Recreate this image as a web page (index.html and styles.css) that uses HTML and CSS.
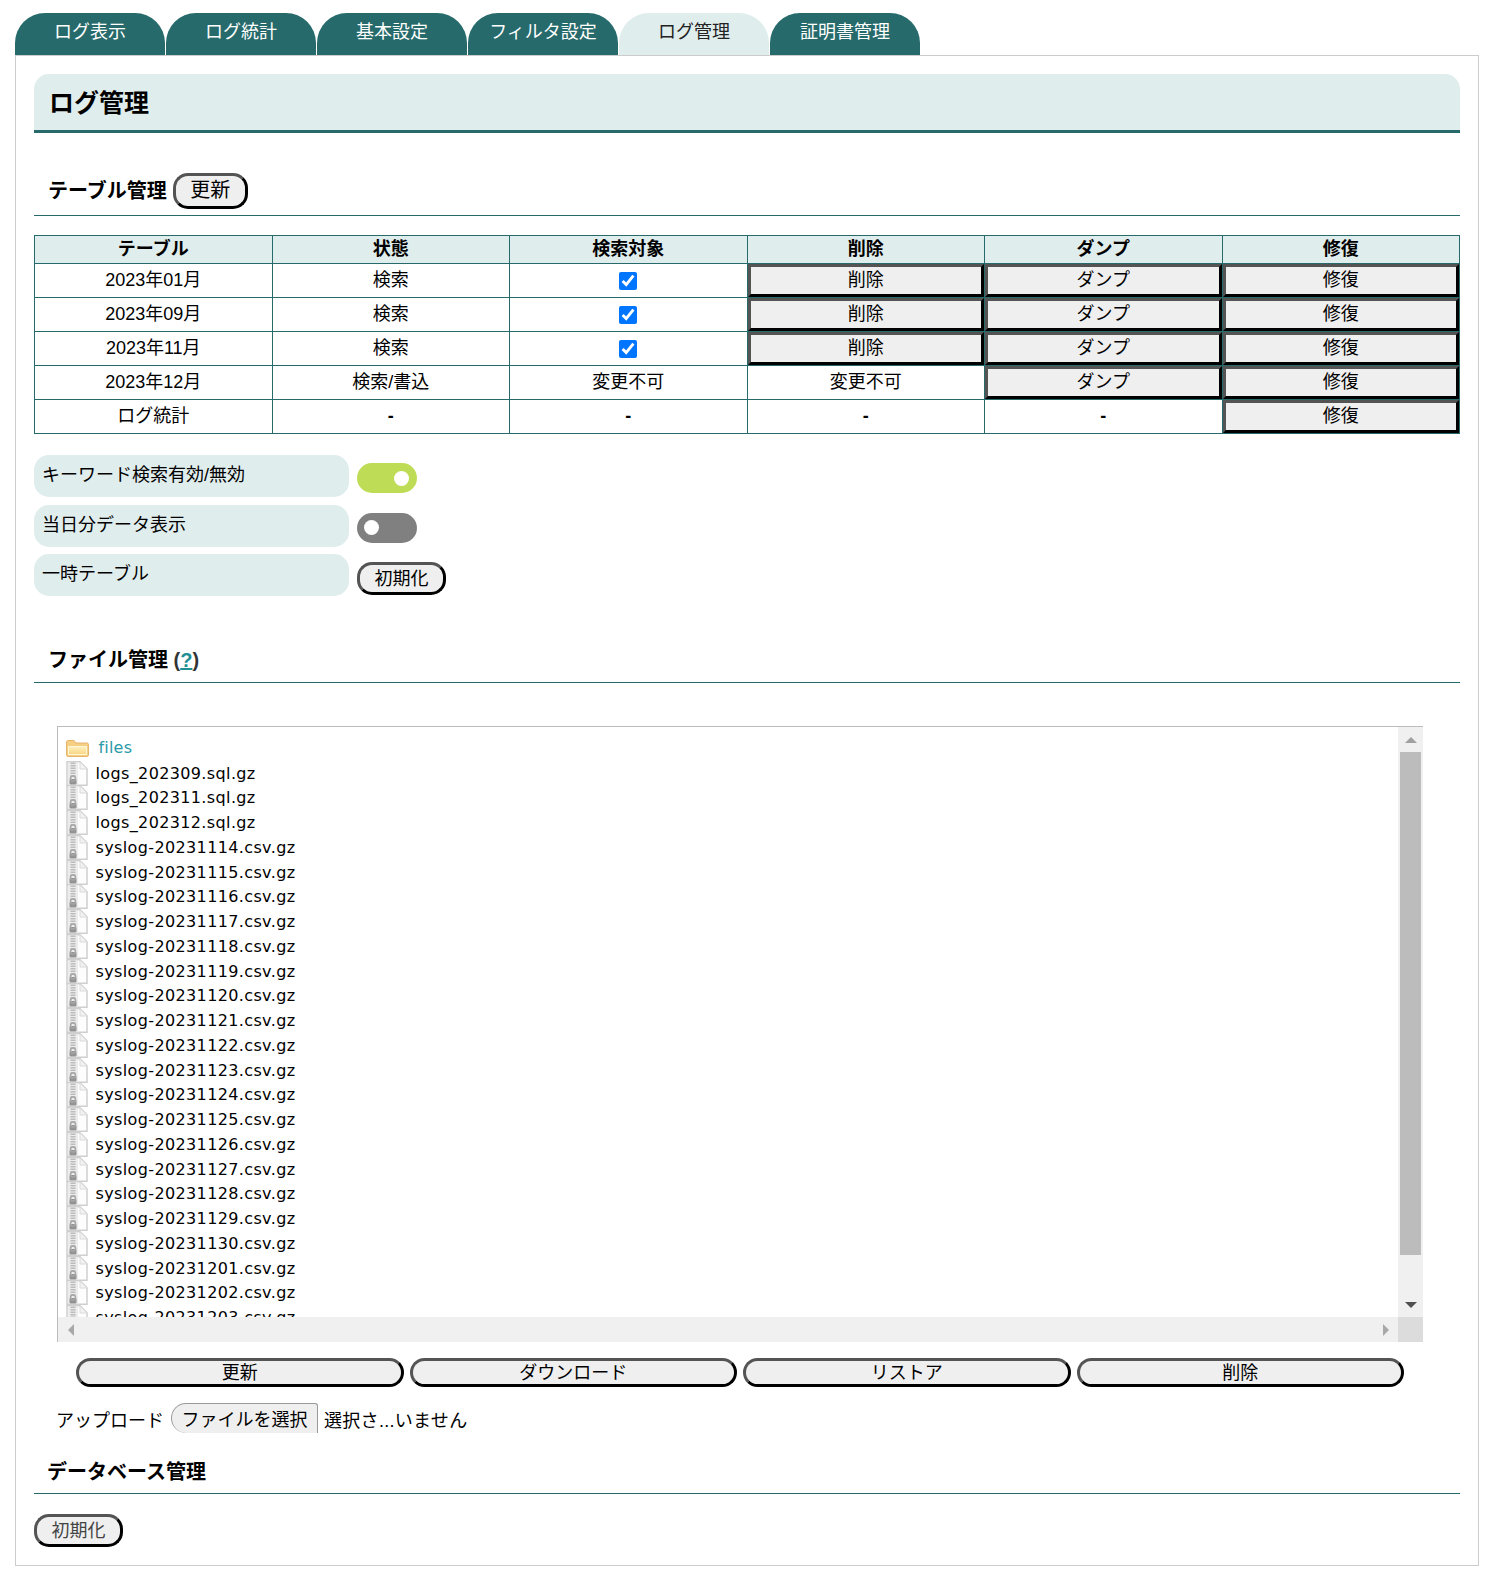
FILE: index.html
```html
<!DOCTYPE html>
<html lang="ja">
<head>
<meta charset="utf-8">
<title>ログ管理</title>
<link rel="stylesheet" href="styles.css">
</head>
<body>
<svg class="defs" width="0" height="0" aria-hidden="true">
  <defs>
    <linearGradient id="fg" x1="0" y1="0" x2="0" y2="1"><stop offset="0" stop-color="#fdf0bd"/><stop offset="1" stop-color="#f9d684"/></linearGradient>
    <symbol id="folder" viewBox="0 0 23 17">
      <path d="M.5 15V2C.5 1.200 1.200.5 2 .5h6l2 2.500h11c.8 0 1.500.7 1.500 1.500V15c0 .8-.7 1.500-1.500 1.500H2C1.200 16.500.5 15.800.5 15z" fill="#f6cf82" stroke="#e5b36b"/>
      <path d="M2.500 6.500h18v8h-18z" fill="url(#fg)" stroke="#fef6d8"/>
    </symbol>
    <symbol id="zip" viewBox="0 0 22 25">
      <path d="M1 .8h13l7 7v16.400h-20z" fill="#fdfdfd" stroke="#cfcfcf" stroke-width="1.500"/>
      <path d="M14 1v7h7z" fill="#f2f2f2" stroke="#dadada"/>
      <path d="M2 1.500h10v22H2z" fill="#ececec"/>
      <path d="M7 1.500v15" stroke="#bcbcbc" stroke-width="5" stroke-dasharray="1.500 1"/>
      <rect x="3.500" y="18" width="7" height="5.500" rx="1" fill="#939393"/>
      <circle cx="7" cy="17.500" r="2.500" fill="none" stroke="#a6a6a6" stroke-width="1.500"/>
    </symbol>
  </defs>
</svg>
<nav class="tabs">
  <a class="tab">ログ表示</a>
  <a class="tab">ログ統計</a>
  <a class="tab">基本設定</a>
  <a class="tab">フィルタ設定</a>
  <a class="tab tab-active">ログ管理</a>
  <a class="tab">証明書管理</a>
</nav>
<main class="panel">
  <h1 class="page-title">ログ管理</h1>

  <h2 class="section section-table">テーブル管理<button class="pill pill-large">更新</button></h2>
  <table class="log-table">
    <thead>
      <tr><th>テーブル</th><th>状態</th><th>検索対象</th><th>削除</th><th>ダンプ</th><th>修復</th></tr>
    </thead>
    <tbody>
      <tr><td>2023年01月</td><td>検索</td><td class="cell-check"><input class="check" type="checkbox" checked></td><td class="cell-btn"><button class="square">削除</button></td><td class="cell-btn"><button class="square">ダンプ</button></td><td class="cell-btn"><button class="square">修復</button></td></tr>
      <tr><td>2023年09月</td><td>検索</td><td class="cell-check"><input class="check" type="checkbox" checked></td><td class="cell-btn"><button class="square">削除</button></td><td class="cell-btn"><button class="square">ダンプ</button></td><td class="cell-btn"><button class="square">修復</button></td></tr>
      <tr><td>2023年11月</td><td>検索</td><td class="cell-check"><input class="check" type="checkbox" checked></td><td class="cell-btn"><button class="square">削除</button></td><td class="cell-btn"><button class="square">ダンプ</button></td><td class="cell-btn"><button class="square">修復</button></td></tr>
      <tr><td>2023年12月</td><td>検索/書込</td><td>変更不可</td><td>変更不可</td><td class="cell-btn"><button class="square">ダンプ</button></td><td class="cell-btn"><button class="square">修復</button></td></tr>
      <tr><td>ログ統計</td><td class="cell-dash">-</td><td class="cell-dash">-</td><td class="cell-dash">-</td><td class="cell-dash">-</td><td class="cell-btn"><button class="square">修復</button></td></tr>
    </tbody>
  </table>

  <div class="settings">
    <div class="setting-label">キーワード検索有効/無効</div>
    <div class="setting-value"><span class="toggle toggle-on"><span class="knob"></span></span></div>
    <div class="setting-label">当日分データ表示</div>
    <div class="setting-value"><span class="toggle"><span class="knob"></span></span></div>
    <div class="setting-label">一時テーブル</div>
    <div class="setting-value"><button class="pill">初期化</button></div>
  </div>

  <h2 class="section section-files">ファイル管理 <span class="help">(<a class="help-link">?</a>)</span></h2>

  <div class="file-box">
    <div class="file-view">
      <ul class="file-list">
        <li class="file-row folder-row"><svg class="icon-folder"><use href="#folder"/></svg><span class="folder-name">files</span></li>
        <li class="file-row"><svg class="icon-zip"><use href="#zip"/></svg><span>logs_202309.sql.gz</span></li>
        <li class="file-row"><svg class="icon-zip"><use href="#zip"/></svg><span>logs_202311.sql.gz</span></li>
        <li class="file-row"><svg class="icon-zip"><use href="#zip"/></svg><span>logs_202312.sql.gz</span></li>
        <li class="file-row"><svg class="icon-zip"><use href="#zip"/></svg><span>syslog-20231114.csv.gz</span></li>
        <li class="file-row"><svg class="icon-zip"><use href="#zip"/></svg><span>syslog-20231115.csv.gz</span></li>
        <li class="file-row"><svg class="icon-zip"><use href="#zip"/></svg><span>syslog-20231116.csv.gz</span></li>
        <li class="file-row"><svg class="icon-zip"><use href="#zip"/></svg><span>syslog-20231117.csv.gz</span></li>
        <li class="file-row"><svg class="icon-zip"><use href="#zip"/></svg><span>syslog-20231118.csv.gz</span></li>
        <li class="file-row"><svg class="icon-zip"><use href="#zip"/></svg><span>syslog-20231119.csv.gz</span></li>
        <li class="file-row"><svg class="icon-zip"><use href="#zip"/></svg><span>syslog-20231120.csv.gz</span></li>
        <li class="file-row"><svg class="icon-zip"><use href="#zip"/></svg><span>syslog-20231121.csv.gz</span></li>
        <li class="file-row"><svg class="icon-zip"><use href="#zip"/></svg><span>syslog-20231122.csv.gz</span></li>
        <li class="file-row"><svg class="icon-zip"><use href="#zip"/></svg><span>syslog-20231123.csv.gz</span></li>
        <li class="file-row"><svg class="icon-zip"><use href="#zip"/></svg><span>syslog-20231124.csv.gz</span></li>
        <li class="file-row"><svg class="icon-zip"><use href="#zip"/></svg><span>syslog-20231125.csv.gz</span></li>
        <li class="file-row"><svg class="icon-zip"><use href="#zip"/></svg><span>syslog-20231126.csv.gz</span></li>
        <li class="file-row"><svg class="icon-zip"><use href="#zip"/></svg><span>syslog-20231127.csv.gz</span></li>
        <li class="file-row"><svg class="icon-zip"><use href="#zip"/></svg><span>syslog-20231128.csv.gz</span></li>
        <li class="file-row"><svg class="icon-zip"><use href="#zip"/></svg><span>syslog-20231129.csv.gz</span></li>
        <li class="file-row"><svg class="icon-zip"><use href="#zip"/></svg><span>syslog-20231130.csv.gz</span></li>
        <li class="file-row"><svg class="icon-zip"><use href="#zip"/></svg><span>syslog-20231201.csv.gz</span></li>
        <li class="file-row"><svg class="icon-zip"><use href="#zip"/></svg><span>syslog-20231202.csv.gz</span></li>
        <li class="file-row"><svg class="icon-zip"><use href="#zip"/></svg><span>syslog-20231203.csv.gz</span></li>
      </ul>
    </div>
    <div class="vbar">
      <span class="sb-btn"><i class="arrow arrow-up"></i></span>
      <span class="sb-track"><span class="sb-thumb"></span></span>
      <span class="sb-btn"><i class="arrow arrow-down"></i></span>
    </div>
    <div class="hbar">
      <span class="sb-btn"><i class="arrow arrow-left"></i></span>
      <span class="sb-btn"><i class="arrow arrow-right"></i></span>
    </div>
    <div class="sb-corner"></div>
  </div>

  <div class="file-actions">
    <button class="pill pill-wide">更新</button>
    <button class="pill pill-wide">ダウンロード</button>
    <button class="pill pill-wide">リストア</button>
    <button class="pill pill-wide">削除</button>
  </div>

  <div class="upload">
    <span class="upload-label">アップロード</span>
    <span class="file-pick">ファイルを選択</span>
    <span class="file-none">選択さ...いません</span>
  </div>

  <h2 class="section section-db">データベース管理</h2>
  <div class="db-actions"><button class="pill pill-dim">初期化</button></div>
</main>
</body>
</html>
```
FILE: styles.css
```css
* { box-sizing: border-box; }
html, body { margin: 0; }
body {
  padding: 13px 8px 0 15px;
  background: #fff;
  color: #000;
  font-family: "Liberation Sans", "Noto Sans CJK JP", sans-serif;
  font-size: 18px;
}
.defs { position: absolute; }

.tabs { display: flex; gap: 1px; height: 42px; }
.tab {
  width: 150px;
  height: 42px;
  border-radius: 30px 30px 0 0;
  background: #266a6b;
  color: #fff;
  text-align: center;
  line-height: 38px;
}
.tab-active { background: #e0eded; color: #222; }

.panel {
  border: 1px solid #ccc;
  padding: 18px;
  height: 1511px;
}
.page-title {
  margin: 0;
  height: 59px;
  padding-left: 15px;
  background: #e0eded;
  border-bottom: 3px solid #266a6b;
  border-radius: 15px 15px 0 0;
  font-size: 25px;
  line-height: 59px;
}

.section {
  margin: 0;
  padding: 0 0 6px 14px;
  border-bottom: 1px solid #266a6b;
  font-size: 20px;
  line-height: 30px;
}
.section-table {
  margin-top: 40px;
  display: flex;
  align-items: center;
  gap: 6px;
}
.section-files { margin-top: 49px; height: 38px; }
.section-db { margin-top: 23px; height: 38px; padding-left: 13px; line-height: 32px; }
.help { color: #333; }
.help-link { color: #1f8f94; text-decoration: underline; }

button { font-family: inherit; color: #000; background: #efefef; }
.pill {
  height: 33px;
  padding: 0 14.500px;
  border: 3px outset #000;
  border-radius: 15px;
  font-size: 18px;
  line-height: 24px;
}
.pill-large { height: 36px; font-size: 20px; width: 75px; padding: 0 0 2px; }
.pill-wide { flex: 1; height: 29px; padding: 1px 0 0; line-height: 22px; }
.pill-dim { color: #444; }

.log-table {
  margin-top: 19px;
  width: 100%;
  table-layout: fixed;
  border-collapse: collapse;
}
.log-table th, .log-table td {
  border: 1px solid #266a6b;
  padding: 0;
  text-align: center;
  font-size: 18px;
}
.log-table th {
  height: 28px;
  background: #e0eded;
  line-height: 22px;
  padding-bottom: 2px;
}
.log-table td {
  height: 34px;
  line-height: 33px;
  vertical-align: top;
}
.log-table .cell-dash { line-height: 33px; font-weight: 700; }
.log-table .cell-check { vertical-align: middle; }
.square {
  display: block;
  width: 100%;
  height: 33px;
  padding: 0 0 2px;
  border: 3px outset #000;
  font-size: 18px;
  line-height: 24px;
}
.check {
  display: block;
  width: 18px;
  height: 18px;
  margin: 0 auto;
}

.settings {
  margin-top: 21px;
  display: grid;
  grid-template-columns: 315px 1fr;
  column-gap: 8px;
  row-gap: 7.500px;
}
.setting-label {
  height: 42px;
  padding-left: 8px;
  background: #e0eded;
  border-radius: 15px;
  line-height: 41px;
}
.setting-value { display: flex; align-items: flex-start; padding-top: 8px; }
.toggle {
  width: 60px;
  height: 30px;
  padding: 7.500px 7px;
  border-radius: 15px;
  background: #808080;
  display: flex;
}
.toggle-on { background: #bedc55; justify-content: flex-end; padding-right: 8px; }
.knob { width: 15px; height: 15px; border-radius: 50%; background: #fff; }

.file-box {
  margin: 43px 0 0 23px;
  width: 1366px;
  height: 616px;
  border-top: 1px solid #bbb;
  border-left: 1px solid #bbb;
  display: grid;
  grid-template-columns: 1fr 25px;
  grid-template-rows: 1fr 25px;
}
.file-view { overflow: hidden; min-height: 0; }
.file-list {
  margin: 0;
  padding: 9px 0 0 8px;
  list-style: none;
  font-family: "DejaVu Sans", sans-serif;
  font-size: 16px;
}
.file-row {
  display: flex;
  align-items: center;
  height: 24.750px;
  color: #000;
  letter-spacing: 0.37px;
}
.icon-zip { width: 22px; height: 25px; margin-right: 7.500px; flex: none; }
.icon-folder { width: 23px; height: 17px; margin-right: 9.500px; flex: none; }
.folder-row { color: #2a9aa8; letter-spacing: 0.2px; }
.folder-name { padding-bottom: 2px; }

.vbar, .hbar { background: #f0f0f0; display: flex; }
.vbar { flex-direction: column; }
.hbar { justify-content: space-between; }
.sb-btn {
  width: 25px;
  height: 25px;
  flex: none;
  display: flex;
  align-items: center;
  justify-content: center;
}
.sb-track { flex: 1; }
.sb-thumb { display: block; height: 503px; margin: 0 2px; background: #bcbcbc; }
.sb-corner { background: #dcdcdc; }
.arrow { display: block; width: 0; height: 0; border: 6px solid transparent; }
.arrow-up { border-top-width: 0; border-bottom-color: #a0a0a0; }
.arrow-down { border-bottom-width: 0; border-top-color: #505050; }
.arrow-left { border-left-width: 0; border-right-color: #a8a8a8; }
.arrow-right { border-right-width: 0; border-left-color: #a8a8a8; }

.file-actions {
  margin: 16px 0 0 42px;
  width: 1328px;
  display: flex;
  gap: 6px;
}

.upload {
  margin: 16px 0 0 22px;
  height: 30px;
  display: flex;
  align-items: center;
}
.upload-label { width: 115px; flex: none; padding-top: 2px; }
.file-pick {
  width: 147px;
  height: 30px;
  flex: none;
  background: #efefef;
  border: solid #999;
  border-width: 1px 1px 0 1px;
  border-radius: 15px 3px 0 15px;
  text-align: center;
  line-height: 32px;
}
.file-none { margin-left: 6px; padding-top: 2px; letter-spacing: 0.3px; }

.db-actions { margin-top: 20px; }
```
